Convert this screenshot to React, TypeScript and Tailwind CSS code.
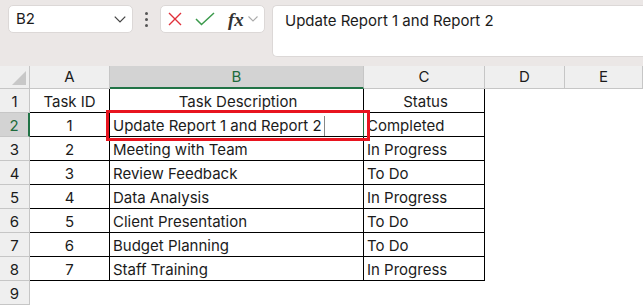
import React from "react";

const ROWS: [string, string, string][] = [
  ["Task ID", "Task Description", "Status"],
  ["1", "Update Report 1 and Report 2", "Completed"],
  ["2", "Meeting with Team", "In Progress"],
  ["3", "Review Feedback", "To Do"],
  ["4", "Data Analysis", "In Progress"],
  ["5", "Client Presentation", "To Do"],
  ["6", "Budget Planning", "To Do"],
  ["7", "Staff Training", "In Progress"],
];

const COLS = ["A", "B", "C", "D", "E"];

export default function App() {
  return (
    <div
      className="relative w-[643px] h-[308px] overflow-hidden bg-white text-[#1b1b1b]"
      style={{ fontFamily: "Inter, 'Noto Sans', sans-serif" }}
    >
      <Toolbar />
      <Sheet />
      {/* highlight box drawn over cell B2 */}
      <div className="absolute left-[106px] top-[110px] w-[264px] h-[31px] border-[3px] border-[#e8141f] pointer-events-none" />
    </div>
  );
}

function Toolbar() {
  return (
    <div className="h-[66px] bg-[#ebe7e6] flex items-start pt-[5px] pl-[8px]">
      <div className="w-[125px] h-[28px] bg-white rounded-[5px] border border-[#dcd8d7] flex items-center justify-between pl-[7px] pr-[6px]">
        <span className="text-[15px]">B2</span>
        <Chevron className="w-[12px] h-[7px] text-[#444]" />
      </div>
      <div className="w-[27px] h-[28px] flex flex-col items-center justify-center gap-[3px]">
        <span className="w-[3px] h-[3px] bg-[#555] rounded-full" />
        <span className="w-[3px] h-[3px] bg-[#555] rounded-full" />
        <span className="w-[3px] h-[3px] bg-[#555] rounded-full" />
      </div>
      <div className="w-[105px] h-[28px] bg-white rounded-[5px] border border-[#dcd8d7] flex items-center pl-[7px] pr-[3px]">
        <svg width="14" height="14" viewBox="0 0 14 14" className="text-[#e0303a]">
          <path d="M1 1L13 13M13 1L1 13" stroke="currentColor" strokeWidth="1.4" fill="none" />
        </svg>
        <svg width="20" height="14" viewBox="0 0 20 14" className="ml-[13px] text-[#3b9a4c]">
          <path d="M1 7L6.5 12.5L19 1" stroke="currentColor" strokeWidth="1.5" fill="none" />
        </svg>
        <span
          className="ml-[13px] text-[19px] italic font-bold leading-none text-[#333]"
          style={{ fontFamily: "'Liberation Serif', serif" }}
        >
          fx
        </span>
        <Chevron className="ml-[4px] w-[10px] h-[6px] text-[#aaa]" />
      </div>
      <div className="ml-[7px] flex-1 h-[52px] bg-white rounded-l-[5px] border border-r-0 border-[#dcd8d7] pl-[12px] pt-[2px]">
        <span className="text-[15px]">Update Report 1 and Report 2</span>
      </div>
    </div>
  );
}

function Chevron({ className }: { className?: string }) {
  return (
    <svg viewBox="0 0 10 6" className={className}>
      <path d="M0.5 0.5L5 5L9.5 0.5" stroke="currentColor" strokeWidth="1.1" fill="none" />
    </svg>
  );
}

function Sheet() {
  return (
    <div className="grid grid-cols-[30px_80px_254px_121px_80px_1fr] grid-rows-[23px_repeat(9,24px)] text-[15px]">
      {/* corner */}
      <div className="bg-[#efefef] border-r border-b border-[#c6c6c6] relative">
        <svg width="14" height="14" viewBox="0 0 14 14" className="absolute right-[3px] bottom-[3px]">
          <path d="M14 0L14 14L0 14Z" fill="#c8c8c8" />
        </svg>
      </div>
      {COLS.map((c) =>
        c === "B" ? (
          <div
            key={c}
            className="bg-[#d3d3d3] border-r border-[#c6c6c6] border-b-2 border-b-[#217346] flex items-center justify-center pt-[2px] text-[#1e6b3c]"
          >
            {c}
          </div>
        ) : (
          <div
            key={c}
            className="bg-[#efefef] border-r border-b border-[#c6c6c6] flex items-center justify-center pt-[1px]"
          >
            {c}
          </div>
        )
      )}
      {Array.from({ length: 9 }).map((_, i) => {
        const row = ROWS[i];
        const sel = i === 1;
        return (
          <React.Fragment key={i}>
            <div
              className={
                sel
                  ? "bg-[#d3d3d3] border-r-2 border-r-[#217346] border-b border-b-[#c6c6c6] flex items-center justify-center pt-[3px] text-[#1e6b3c]"
                  : "bg-[#efefef] border-r border-b border-[#c6c6c6] flex items-center justify-center pt-[3px]"
              }
            >
              {i + 1}
            </div>
            {row ? (
              <>
                <div className="border-r border-b border-black flex items-center justify-center pt-[3px]">
                  {row[0]}
                </div>
                <div
                  className={`border-r border-b border-black flex items-center pl-[3px] pt-[3px] ${
                    i === 0 ? "justify-center" : ""
                  } ${sel ? "border-r-[#217346]" : ""}`}
                >
                  {row[1]}
                  {sel && <span className="ml-[2px] w-px h-[20px] bg-[#888]" />}
                </div>
                <div
                  className={`border-r border-b border-black flex items-center pl-[3px] pt-[3px] ${
                    i === 0 ? "justify-center" : ""
                  }`}
                >
                  {row[2]}
                </div>
                <div />
                <div />
              </>
            ) : (
              <>
                <div />
                <div />
                <div />
                <div />
                <div />
              </>
            )}
          </React.Fragment>
        );
      })}
    </div>
  );
}
